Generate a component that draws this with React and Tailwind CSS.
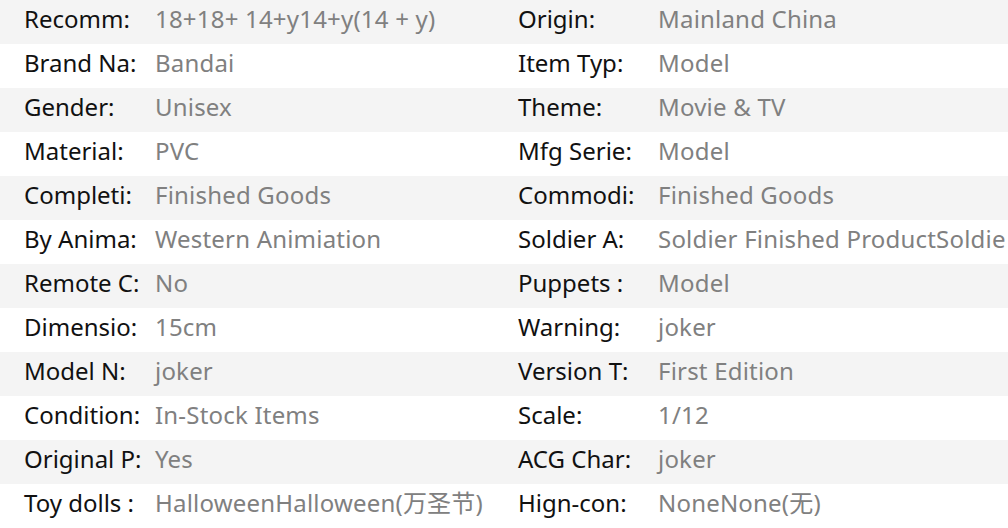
export default function App() {
  const rows = [
    ["Recomm:", "18+18+ 14+y14+y(14 + y)", "Origin:", "Mainland China"],
    ["Brand Na:", "Bandai", "Item Typ:", "Model"],
    ["Gender:", "Unisex", "Theme:", "Movie & TV"],
    ["Material:", "PVC", "Mfg Serie:", "Model"],
    ["Completi:", "Finished Goods", "Commodi:", "Finished Goods"],
    ["By Anima:", "Western Animiation", "Soldier A:", "Soldier Finished ProductSoldie"],
    ["Remote C:", "No", "Puppets :", "Model"],
    ["Dimensio:", "15cm", "Warning:", "joker"],
    ["Model N:", "joker", "Version T:", "First Edition"],
    ["Condition:", "In-Stock Items", "Scale:", "1/12"],
    ["Original P:", "Yes", "ACG Char:", "joker"],
    ["Toy dolls :", "HalloweenHalloween(万圣节)", "Hign-con:", "NoneNone(无)"],
  ];
  return (
    <div
      className="w-[1008px] h-[528px] overflow-hidden bg-white text-[24px] leading-[32px]"
      style={{ fontFamily: '"Noto Sans", "Noto Sans CJK SC", sans-serif' }}
    >
      {rows.map((r, i) => (
        <div
          key={i}
          className={`flex h-[44px] items-center pb-[6px] whitespace-nowrap ${i % 2 === 0 ? "bg-[#f4f4f4]" : "bg-white"}`}
        >
          <div className="flex w-[494px] shrink-0 pl-[24px] overflow-hidden">
            <span className="w-[131px] shrink-0 text-[#111]">{r[0]}</span>
            <span className="text-[#808080] tracking-[0.2px]">{r[1]}</span>
          </div>
          <div className="flex flex-1 pl-[24px] overflow-hidden">
            <span className="w-[140px] shrink-0 text-[#111]">{r[2]}</span>
            <span className="text-[#808080] tracking-[0.2px]">{r[3]}</span>
          </div>
        </div>
      ))}
    </div>
  );
}
